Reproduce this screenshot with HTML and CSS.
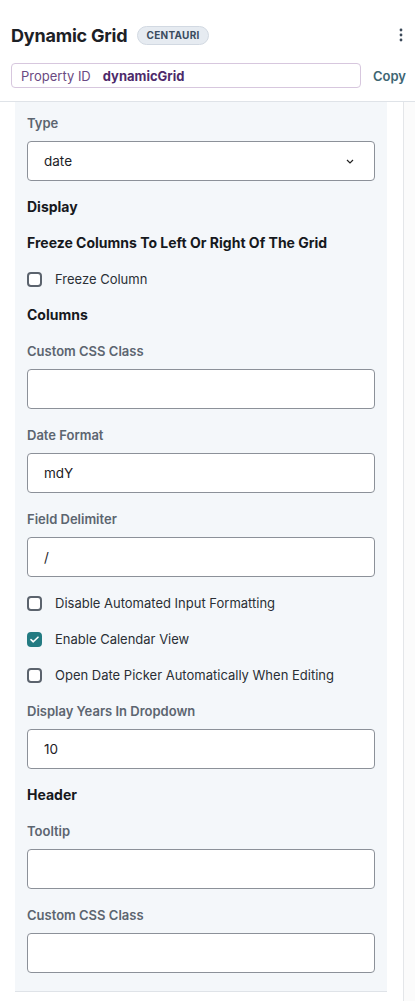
FILE: index.html
```html
<!DOCTYPE html>
<html>
<head>
<meta charset="utf-8">
<link rel="stylesheet" href="styles.css">
</head>
<body>
<div class="page">
  <header class="head">
    <div class="title-row">
      <h1 class="title">Dynamic Grid</h1>
      <span class="badge">CENTAURI</span>
      <span class="kebab"><svg width="4" height="14" viewBox="0 0 4 14"><circle cx="2" cy="2" r="1.4" fill="#3c4a5a"/><circle cx="2" cy="7" r="1.4" fill="#3c4a5a"/><circle cx="2" cy="12" r="1.4" fill="#3c4a5a"/></svg></span>
    </div>
    <div class="prop-row">
      <div class="prop-box"><span class="prop-key">Property ID</span><span class="prop-val">dynamicGrid</span></div>
      <span class="copy">Copy</span>
    </div>
  </header>
  <div class="body">
    <div class="panel">
      <div class="field">
        <div class="label">Type</div>
        <div class="input select"><span>date</span><svg class="chev" width="8" height="5" viewBox="0 0 8 5"><path d="M1 1l3 3 3-3" fill="none" stroke="#222" stroke-width="1.2"/></svg></div>
      </div>
      <div class="heading">Display</div>
      <div class="heading">Freeze Columns To Left Or Right Of The Grid</div>
      <label class="check"><span class="box"></span>Freeze Column</label>
      <div class="heading">Columns</div>
      <div class="field">
        <div class="label">Custom CSS Class</div>
        <div class="input"></div>
      </div>
      <div class="field">
        <div class="label">Date Format</div>
        <div class="input">mdY</div>
      </div>
      <div class="field">
        <div class="label">Field Delimiter</div>
        <div class="input">/</div>
      </div>
      <label class="check"><span class="box"></span>Disable Automated Input Formatting</label>
      <label class="check"><span class="box on"><svg width="9" height="7" viewBox="0 0 9 7"><path d="M1 3.6l2.3 2.2L8 1.2" fill="none" stroke="#fff" stroke-width="1.6" stroke-linecap="round" stroke-linejoin="round"/></svg></span>Enable Calendar View</label>
      <label class="check"><span class="box"></span>Open Date Picker Automatically When Editing</label>
      <div class="field">
        <div class="label">Display Years In Dropdown</div>
        <div class="input">10</div>
      </div>
      <div class="heading">Header</div>
      <div class="field">
        <div class="label">Tooltip</div>
        <div class="input"></div>
      </div>
      <div class="field">
        <div class="label">Custom CSS Class</div>
        <div class="input"></div>
      </div>
    </div>
    <div class="gutter"></div>
    <div class="side"></div>
  </div>
</div>
</body>
</html>
```
FILE: styles.css
```css
* { box-sizing: border-box; }
html, body { margin: 0; padding: 0; background: #fff; }
body { font-family: Inter, "Noto Sans", sans-serif; color: #1b1f24; width: 415px; height: 1001px; overflow: hidden; }
.page { display: flex; flex-direction: column; height: 1001px; }
.head { padding: 24px 9px 0 11px; border-bottom: 1px solid #dfe3e8; height: 102px; flex: none; }
.title-row { display: flex; align-items: center; height: 22px; }
.title { font-size: 18px; font-weight: 700; margin: 0; letter-spacing: -0.2px; color: #1d2126; }
.badge { margin-left: 10px; background: #e6ebf1; border: 1px solid #d2d9e2; border-radius: 10px; height: 19px; padding: 0 8px; font-size: 10px; font-weight: 700; letter-spacing: 0.3px; color: #3b4b5e; display: flex; align-items: center; }
.kebab { margin-left: auto; display: flex; padding-right: 3px; }
.prop-row { display: flex; align-items: center; margin-top: 17px; }
.prop-box { width: 350px; height: 25px; border: 1px solid #d7c7de; border-radius: 4px; display: flex; align-items: center; padding-left: 9px; font-size: 13px; }
.prop-key { color: #6a4a82; }
.prop-val { color: #4d2a6a; font-weight: 700; margin-left: 12px; }
.copy { margin-left: auto; font-size: 13px; font-weight: 600; color: #3e6673; }
.body { display: flex; flex: 1; align-items: flex-start; }
.panel { margin-left: 15px; width: 372px; background: #f4f7fa; border-bottom: 1px solid #dfe3e8; padding: 11px 12px 18px 12px; display: flex; flex-direction: column; gap: 16px; flex: none; }
.gutter { width: 16px; flex: none; }
.side { flex: 1; align-self: stretch; border-left: 1px solid #e4e6e9; background: #fbfbfb; }
.field { display: flex; flex-direction: column; gap: 8px; }
.label { font-size: 13px; font-weight: 600; color: #5c6570; line-height: 20px; }
.heading { font-size: 14px; font-weight: 700; color: #16191d; line-height: 20px; }
.input { height: 40px; background: #fff; border: 1px solid #8c9199; border-radius: 4px; padding: 0 16px; display: flex; align-items: center; font-size: 13.5px; color: #1d2126; }
.select { justify-content: space-between; }
.chev { margin-right: 4px; }
.check { display: flex; align-items: center; font-size: 13px; color: #2a2f35; line-height: 20px; }
.box { width: 15px; height: 15px; border: 2px solid #5b636d; border-radius: 4px; margin-right: 13px; display: flex; align-items: center; justify-content: center; background: #fff; }
.box.on { background: #237b82; border-color: #237b82; }
```
